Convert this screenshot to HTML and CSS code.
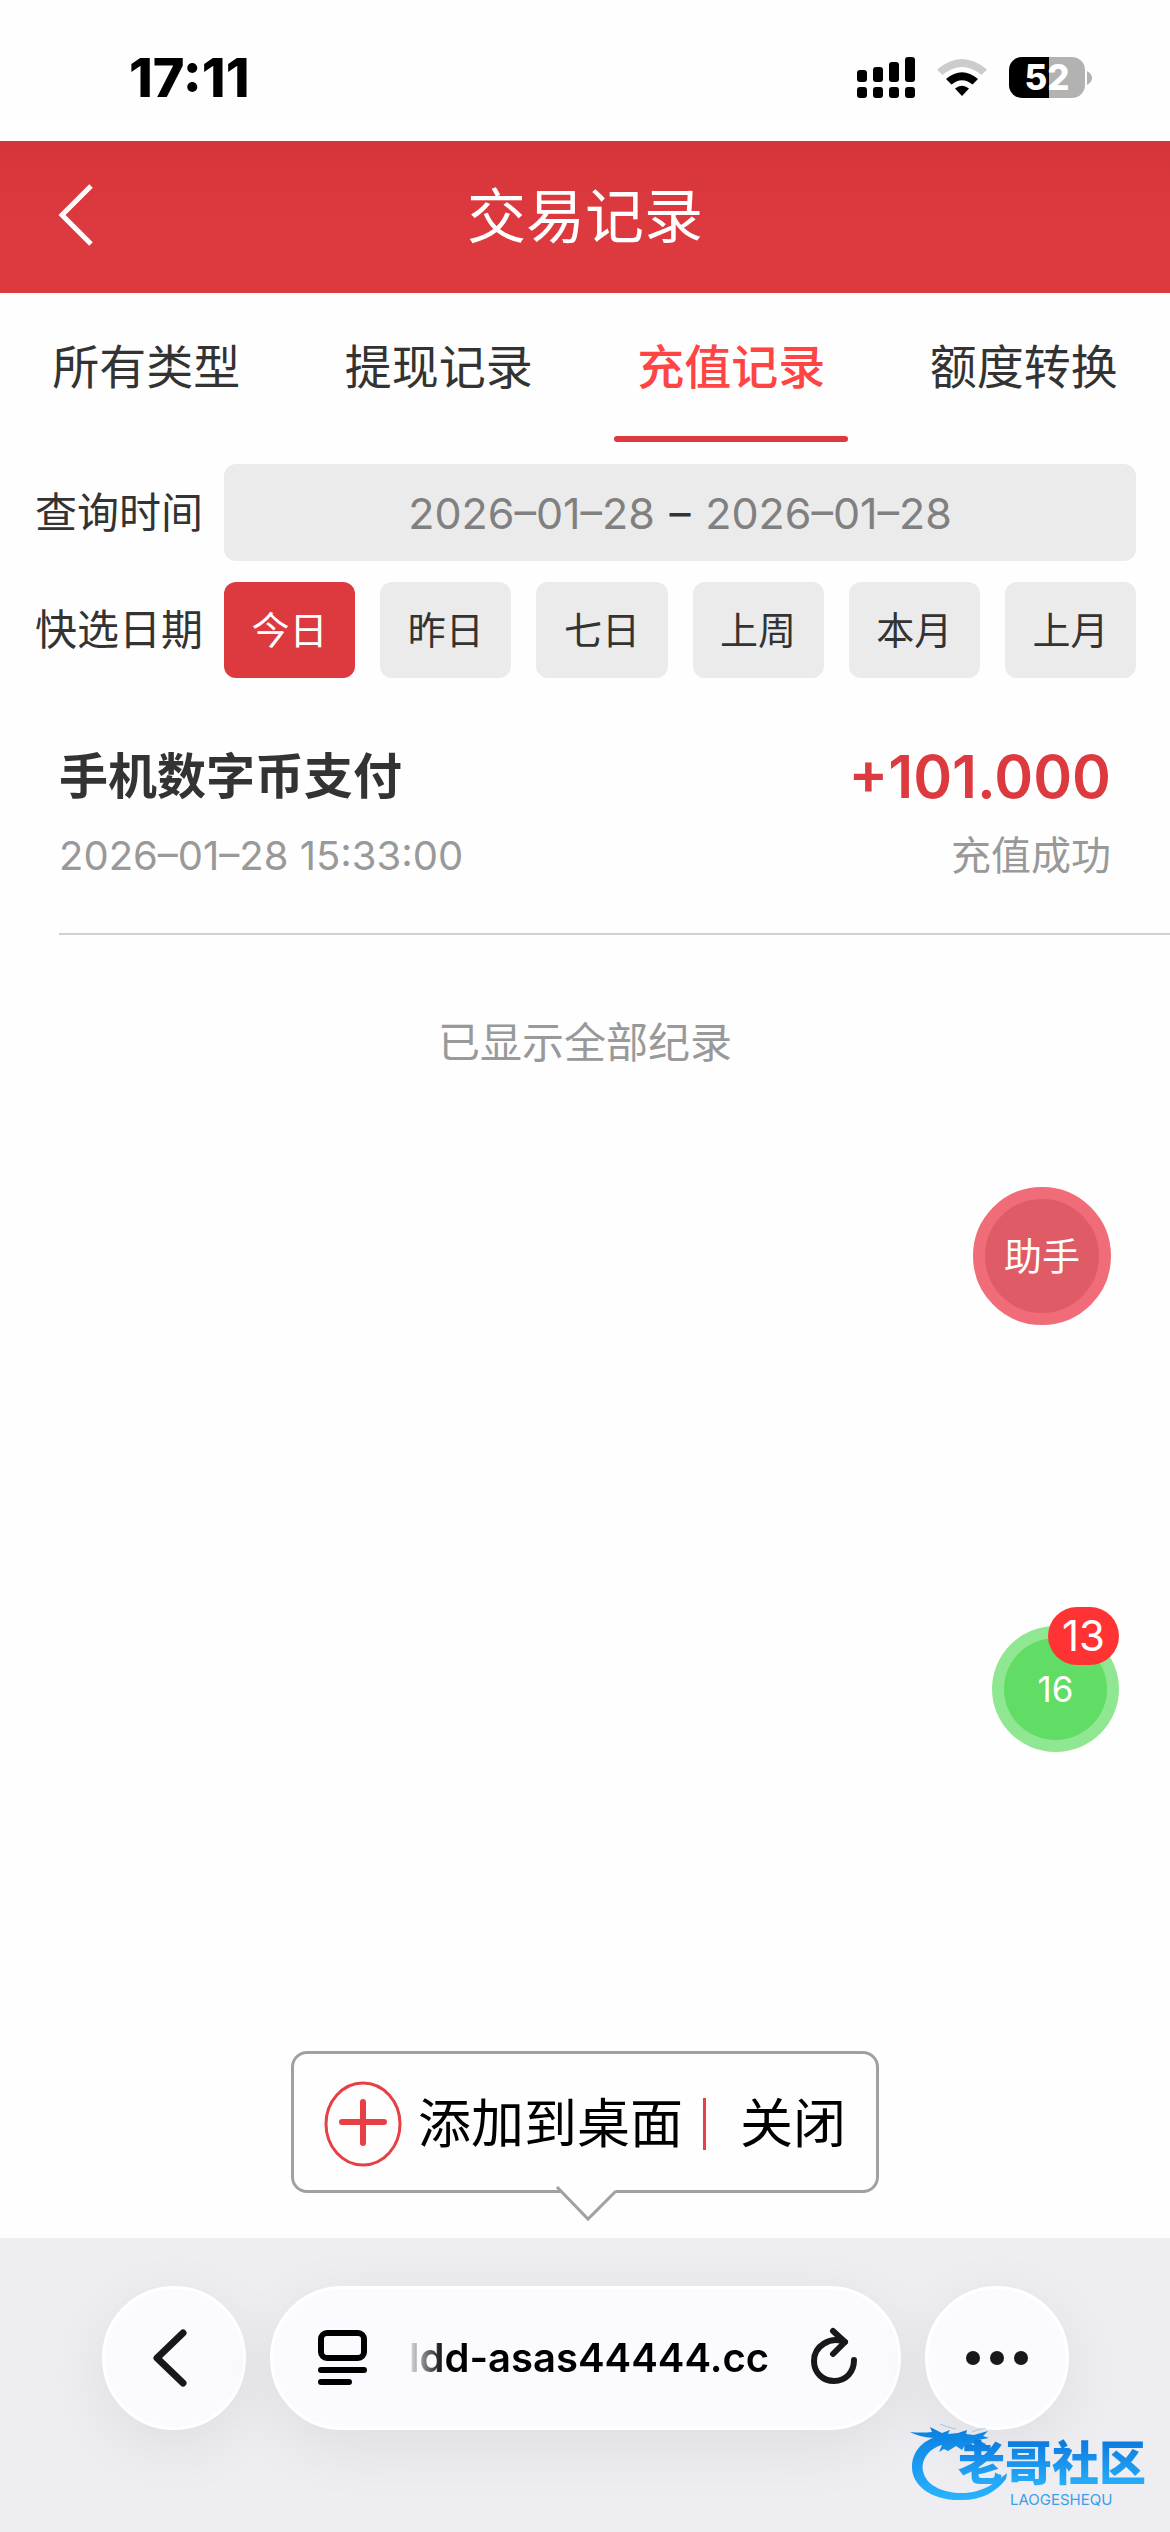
FILE: index.html
```html
<!DOCTYPE html>
<html lang="zh-CN">
<head>
<meta charset="utf-8">
<meta name="viewport" content="width=device-width, initial-scale=1">
<title>交易记录</title>
<link rel="stylesheet" href="styles.css">
</head>

<body>
<div class="status-bar">
  <div class="clock">17:11</div>
  <div class="status-icons">
    <svg width="58" height="42" viewBox="0 0 58 42">
      <rect x="0" y="13" width="10" height="12" rx="3"/>
      <rect x="16" y="10" width="10" height="15" rx="3"/>
      <rect x="32" y="5" width="10" height="20" rx="3"/>
      <rect x="48" y="0" width="10" height="25" rx="3"/>
      <rect x="0" y="30" width="10" height="11" rx="3"/>
      <rect x="16" y="30" width="10" height="11" rx="3"/>
      <rect x="32" y="30" width="10" height="11" rx="3"/>
      <rect x="48" y="30" width="10" height="11" rx="3"/>
    </svg>
    <svg width="50" height="38" viewBox="0 0 50 38">
      <path d="M0 10.500 Q25 -10.500 50 10.500 L44.500 16 Q25 0 5.500 16 Z" fill="#ccc"/>
      <path d="M9 20 Q25 6.500 41 20 L35.500 25.500 Q25 17 14.500 25.500 Z"/>
      <path d="M18 29.500 Q25 24 32 29.500 L25 37 Z"/>
    </svg>
    <div class="battery">
      <span class="battery-level">52</span>
      <svg class="battery-tip" width="5" height="14" viewBox="0 0 5 14"><path d="M0 0 Q5 3 5 7 Q5 11 0 14 Z" fill="#b2b2b2"/></svg>
    </div>
  </div>
</div>

<header class="header">
  <button class="back" type="button" aria-label="返回">
    <svg width="36" height="66" viewBox="0 0 36 66"><path d="M33 2 L4 31 L33 60" fill="none" stroke="#fff" stroke-width="5"/></svg>
  </button>
  <h1>交易记录</h1>
</header>

<main class="content">
  <nav class="tabs">
    <a class="tab" href="#all">所有类型</a>
    <a class="tab" href="#withdraw">提现记录</a>
    <a class="tab active" href="#deposit">充值记录</a>
    <a class="tab" href="#transfer">额度转换</a>
  </nav>

  <form class="filters">
    <div class="filter-row">
      <label class="filter-label" for="date-from">查询时间</label>
      <div class="date-range">
        <input class="date" id="date-from" type="text" value="2026–01–28" readonly>
        <span>–</span>
        <input class="date" id="date-to" type="text" value="2026–01–28" aria-label="结束日期" readonly>
      </div>
    </div>
    <div class="filter-row">
      <span class="filter-label">快选日期</span>
      <div class="quick">
        <button class="quick-btn active" type="button">今日</button>
        <button class="quick-btn" type="button">昨日</button>
        <button class="quick-btn" type="button">七日</button>
        <button class="quick-btn" type="button">上周</button>
        <button class="quick-btn" type="button">本月</button>
        <button class="quick-btn" type="button">上月</button>
      </div>
    </div>
  </form>

  <div class="record">
    <div class="record-line">
      <h2>手机数字币支付</h2>
      <strong class="amount">+101.000</strong>
    </div>
    <div class="record-line meta">
      <time>2026–01–28 15:33:00</time>
      <span class="result">充值成功</span>
    </div>
  </div>

  <p class="list-end">已显示全部纪录</p>
</main>

<!-- floating buttons -->
<button class="float helper" type="button">助手</button>
<button class="float message" type="button">16<span class="badge">13</span></button>

<div class="install-tip">
  <div class="install-box">
    <button class="install-add" type="button">
      <svg width="78" height="86" viewBox="0 0 78 86" fill="none" stroke="#e83f44">
        <ellipse cx="39" cy="43" rx="37" ry="41" stroke-width="3"/>
        <path d="M39 21 V62 M18 41 H60" stroke-width="6" stroke-linecap="round"/>
      </svg>
      添加到桌面
    </button>
    <button class="install-close" type="button">关闭</button>
    <svg class="install-arrow" width="64" height="36" viewBox="0 0 64 36">
      <path d="M2 1 L33 33 L61 5 L61 1 Z" fill="#fefefe"/>
      <path d="M2 1 L33 33 L61 5" fill="none" stroke="#a0a0a0" stroke-width="3"/>
    </svg>
  </div>
</div>

<footer class="browser-bar">
  <button class="pill round" type="button" aria-label="后退">
    <svg width="44" height="60" viewBox="0 0 44 60"><path d="M31 5 L5 30 L31 55" fill="none" stroke="#18181c" stroke-width="7" stroke-linecap="round" stroke-linejoin="round"/></svg>
  </button>
  <div class="pill address">
    <svg width="50" height="56" viewBox="0 0 50 56" fill="none" stroke="#000">
      <rect x="3" y="3" width="43" height="25" rx="6" stroke-width="6"/>
      <path d="M3 40 H46 M3 52 H31" stroke-width="6" stroke-linecap="round"/>
    </svg>
    <input class="url" type="text" value="ldd-asas44444.cc" aria-label="网址" readonly>
    <button class="reload" type="button" aria-label="刷新">
      <svg width="48" height="62" viewBox="0 0 48 62" fill="none" stroke="#18181c" stroke-width="6" stroke-linecap="round" stroke-linejoin="round">
        <path d="M35 15 C20 9 4 19 4 34 C4 46 13 54 24 54 C36 54 44 45 44 33"/>
        <path d="M23 4 L35 15 L23 27"/>
      </svg>
    </button>
  </div>
  <button class="pill round" type="button" aria-label="更多">
    <svg width="62" height="14" viewBox="0 0 62 14" fill="#18181c"><circle cx="7" cy="7" r="7"/><circle cx="31" cy="7" r="7"/><circle cx="55" cy="7" r="7"/></svg>
  </button>
</footer>

<div class="brand">
  <svg class="brand-dragon" width="100" height="80" viewBox="0 0 100 80">
    <defs>
      <linearGradient id="blue" x1="0" y1="0" x2="0" y2="1">
        <stop offset="0" stop-color="#0a7fe0"/>
        <stop offset="1" stop-color="#29b4ff"/>
      </linearGradient>
    </defs>
    <path fill="url(#blue)" d="M0 8 Q11 9 22 8 L20 3 L32 9 L40 6 L38 10 L48 9 L57 6 L56 10 L64 11 L78 7 L73 12 L79 14 L68 16 L76 20 L74 23 L61 19 L66 24 L55 21 L52 26 L46 22 L38 27 L34 25 L29 28 L32 21 C18 25 11 36 13 47 C16 62 34 70 56 69 C76 67 86 58 97 49 L96 55 C86 68 72 76 52 76 C22 77 2 62 2 43 C2 28 12 18 23 14 Q9 13 0 8 Z"/>
    <path fill="none" stroke="#0a7fe0" stroke-width="1" opacity="0.3" d="M46 5 Q36 3 30 0 M76 4 Q68 5 62 8"/>
  </svg>
  <div class="brand-name">老哥社区</div>
  <div class="brand-sub">LAOGESHEQU</div>
</div>
</body>
</html>
```
FILE: styles.css
```css
* {
  box-sizing: border-box;
}

body {
  margin: 0;
  min-height: 100vh;
  display: flex;
  flex-direction: column;
  position: relative;
  background: #fefefe;
  color: #333;
  font-family: Inter, "Noto Sans CJK SC", sans-serif;
  font-size: 42px;
  line-height: 60px;
}

button, input {
  margin: 0;
  padding: 0;
  border: 0;
  background: none;
  color: inherit;
  font: inherit;
}

h1, h2, p {
  margin: 0;
}

svg {
  display: block;
  flex: none;
}

/* status bar */
.status-bar {
  height: 141px;
  padding: 14px 78px 0 129px;
  display: flex;
  align-items: center;
  justify-content: space-between;
  color: #000;
}

.clock {
  font-size: 54px;
  font-weight: 800;
}

.status-icons {
  display: flex;
  align-items: center;
  gap: 22px;
}

.battery {
  display: flex;
  align-items: center;
  gap: 2px;
}

.battery-level {
  width: 76px;
  height: 41px;
  border-radius: 13px;
  background: linear-gradient(90deg, #000 52%, #b2b2b2 52%);
  color: #fff;
  font-size: 35px;
  font-weight: 800;
  line-height: 41px;
  text-align: center;
}

/* page header */
.header {
  height: 152px;
  padding: 0 58px;
  display: grid;
  grid-template-columns: 1fr auto 1fr;
  align-items: center;
  background: linear-gradient(#d63539, #dd3a3f 60%);
  color: #fff;
}

.header h1 {
  font-size: 59px;
  font-weight: 400;
}

/* tabs */
.content {
  flex: 1;
}

.tabs {
  display: grid;
  grid-template-columns: repeat(4, 1fr);
}

.tab {
  height: 149px;
  display: flex;
  flex-direction: column;
  align-items: center;
  justify-content: space-between;
  padding-top: 44px;
  font-size: 47px;
  color: #333;
  text-decoration: none;
}

.tab::after {
  content: "";
  width: 80%;
  height: 6px;
  border-radius: 3px;
}

.tab.active {
  color: #ff4444;
  font-weight: 500;
}

.tab.active::after {
  background: #dd3a3f;
}

/* filters */
.filters {
  padding: 22px 34px 0 35px;
  display: flex;
  flex-direction: column;
  gap: 21px;
}

.filter-row {
  display: grid;
  grid-template-columns: 168px 1fr;
  gap: 21px;
  align-items: center;
}

.date-range {
  height: 97px;
  display: flex;
  align-items: center;
  justify-content: center;
  gap: 13px;
  border-radius: 12px;
  background: #ebebeb;
}

.date {
  width: 250px;
  color: #808080;
  font-size: 43px;
  text-align: center;
}

.quick {
  display: grid;
  grid-template-columns: repeat(6, 1fr);
  gap: 25px;
}

.quick-btn {
  height: 96px;
  border-radius: 12px;
  background: #ebebeb;
  font-size: 38px;
}

.quick-btn.active {
  background: #dd3a3f;
  color: #fff;
}

/* record list */
.record {
  margin-left: 59px;
  padding: 64px 59px 42px 0;
  border-bottom: 2px solid #d0d0d0;
}

.record-line {
  display: flex;
  align-items: center;
  justify-content: space-between;
  height: 70px;
}

.record-line.meta {
  margin-top: 9px;
  color: #999;
  font-size: 40px;
}

.record h2 {
  font-size: 49px;
  font-weight: 600;
}

.amount {
  color: #dd3a3f;
  font-size: 59px;
  font-weight: 600;
}

.list-end {
  padding-top: 78px;
  color: #999;
  text-align: center;
}

/* floating buttons */
.float {
  position: absolute;
  border-radius: 50%;
  color: #fff;
}

.helper {
  top: 1187px;
  right: 59px;
  width: 138px;
  height: 138px;
  border: 12px solid #f06c78;
  background: #df5b66;
  font-size: 38px;
}

.message {
  top: 1626px;
  right: 51px;
  width: 127px;
  height: 126px;
  border: 12px solid #8fe792;
  background: #61dc64;
  font-size: 35px;
}

.badge {
  position: absolute;
  top: -31px;
  right: -12px;
  width: 71px;
  height: 58px;
  border-radius: 29px;
  background: #ff3333;
  font-size: 42px;
  line-height: 58px;
}

/* add to home screen */
.install-tip {
  position: absolute;
  bottom: 339px;
  left: 0;
  right: 0;
  display: flex;
  justify-content: center;
}

.install-box {
  position: relative;
  height: 142px;
  padding: 4px 30px 0;
  display: flex;
  align-items: center;
  border: 3px solid #a0a0a0;
  border-radius: 16px;
  background: #fefefe;
  color: #000;
  font-size: 53px;
}

.install-add {
  display: flex;
  align-items: center;
  gap: 16px;
}

.install-close {
  margin-left: 20px;
  padding-left: 34px;
  border-left: 3px solid #e83f44;
  line-height: 52px;
}

.install-arrow {
  position: absolute;
  top: 132px;
  left: 50%;
  margin-left: -30px;
}

/* browser toolbar */
.browser-bar {
  height: 294px;
  padding: 48px 101px 0 102px;
  display: flex;
  gap: 24px;
  background: #ededf2;
}

.pill {
  height: 144px;
  display: flex;
  align-items: center;
  border: 3px solid #fff;
  border-radius: 72px;
  background: #fbfaff;
  box-shadow: 0 16px 64px rgba(0, 0, 0, 0.07);
}

.round {
  width: 144px;
  flex: none;
  justify-content: center;
}

.address {
  flex: 1;
  min-width: 0;
  padding: 0 40px 0 45px;
  justify-content: space-between;
}

.url {
  width: 360px;
  color: #000;
  font-size: 40px;
  font-weight: 600;
  text-align: right;
  -webkit-mask-image: linear-gradient(90deg, rgba(0, 0, 0, 0.1), #000 36px);
  mask-image: linear-gradient(90deg, rgba(0, 0, 0, 0.1), #000 36px);
}

/* community mark in the corner */
.brand {
  position: absolute;
  right: 16px;
  bottom: 24px;
  width: 244px;
  height: 84px;
  padding: 15px 0 0 48px;
}

.brand-dragon {
  position: absolute;
  top: 0;
  left: 0;
}

.brand-name {
  position: relative;
  background: linear-gradient(#0a78de, #29b0fb);
  -webkit-background-clip: text;
  background-clip: text;
  color: transparent;
  font-size: 47px;
  font-weight: 900;
  line-height: 48px;
  white-space: nowrap;
}

.brand-sub {
  position: relative;
  padding: 4px 0 0 52px;
  color: #3a9fe8;
  font-size: 15px;
  line-height: 18px;
}
```
